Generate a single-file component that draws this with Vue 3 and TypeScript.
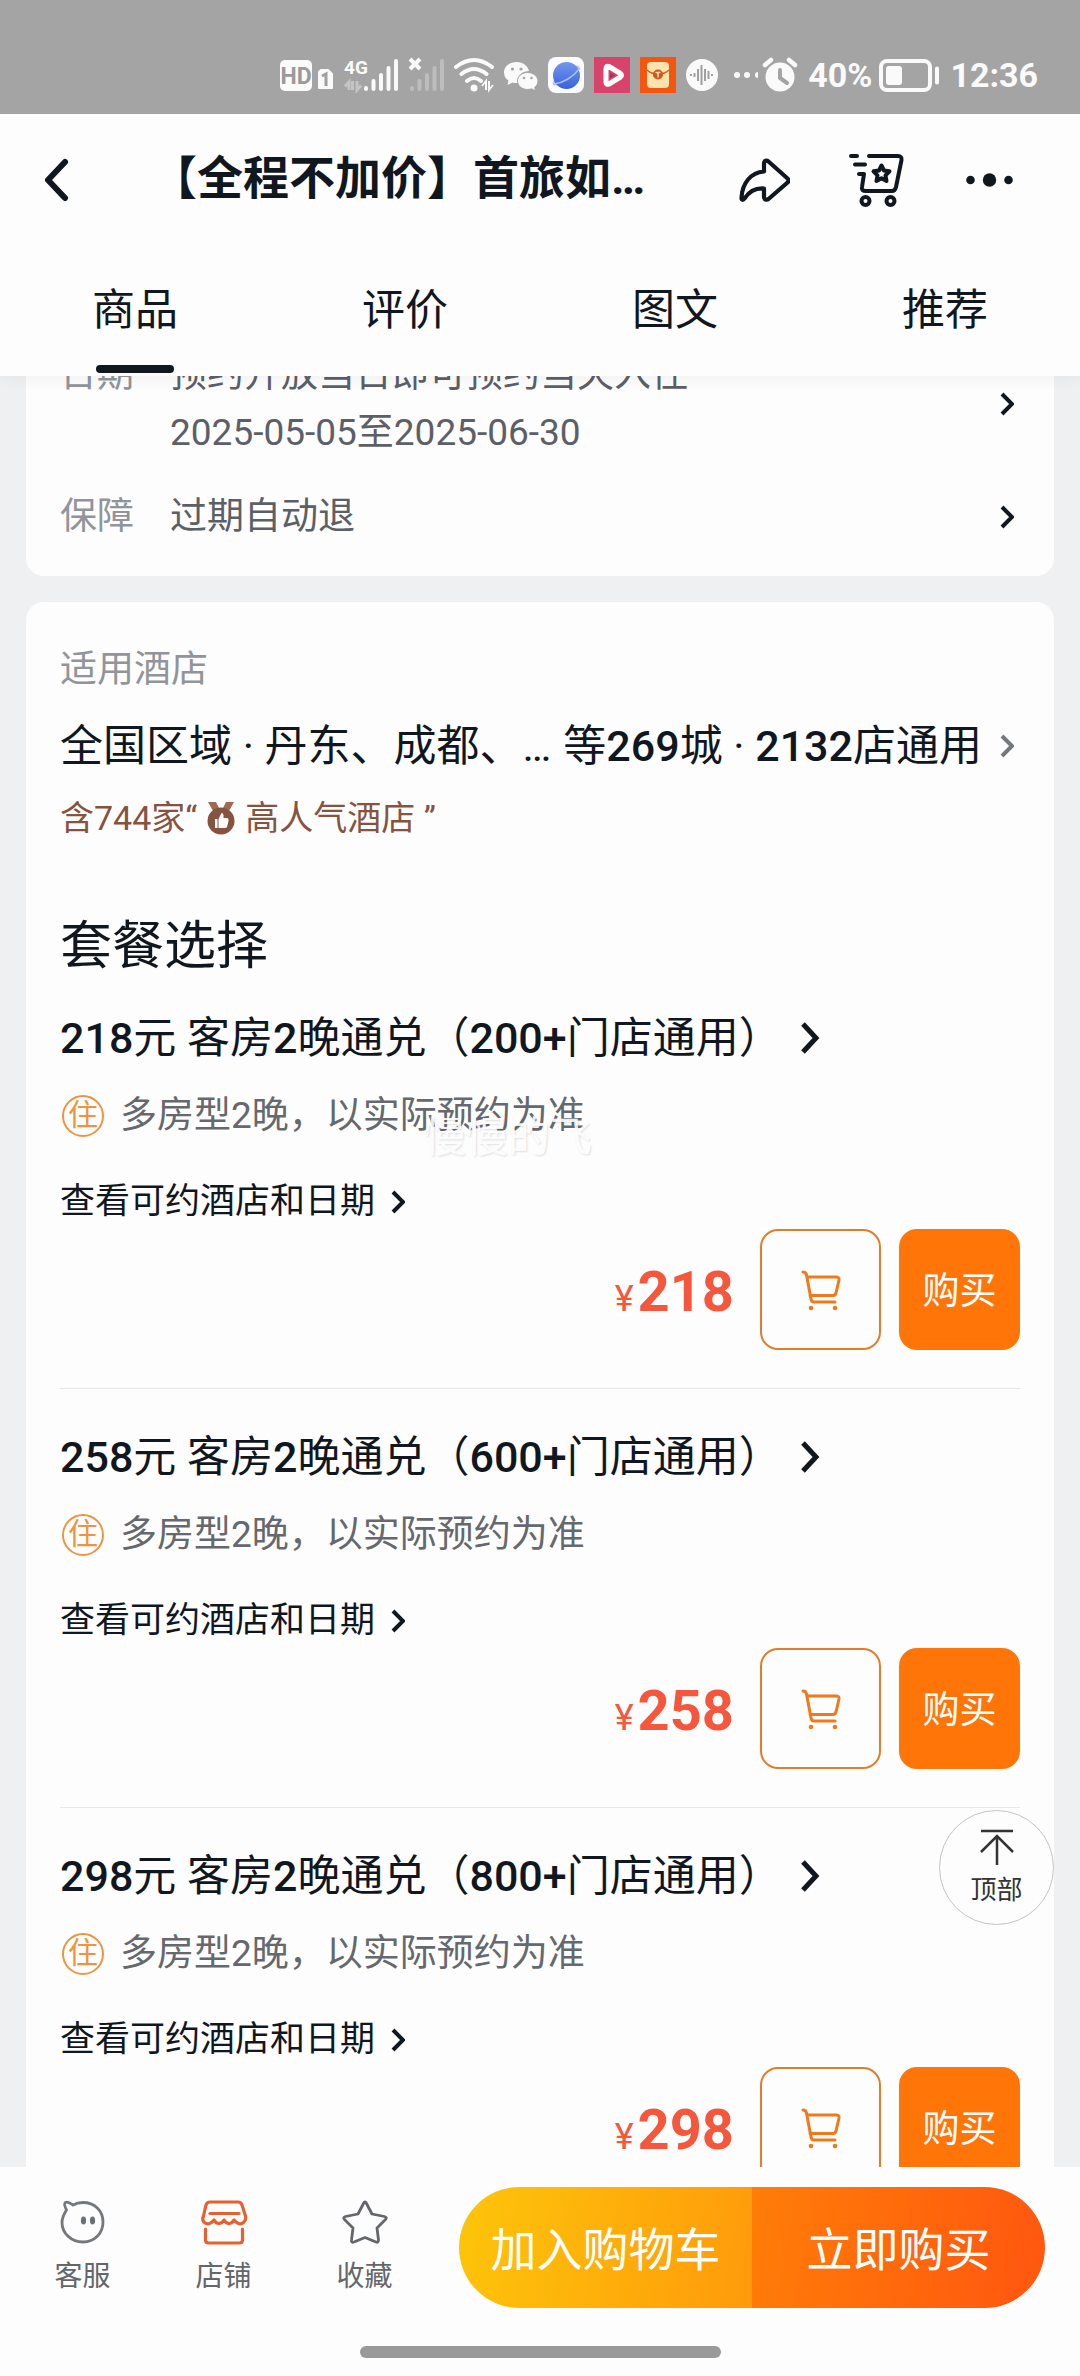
<script setup lang="ts">
import { ref } from 'vue'

interface PackageItem {
  id: number
  price: number
  stores: string
}

const tabs = ['商品', '评价', '图文', '推荐']
const activeTab = ref(0)

const packages: PackageItem[] = [
  { id: 1, price: 218, stores: '200+' },
  { id: 2, price: 258, stores: '600+' },
  { id: 3, price: 298, stores: '800+' },
]
</script>

<template>
  <div class="screen">
    <div class="status">
      <svg width="54" height="36" viewBox="0 0 54 36">
        <rect x="0" y="3" width="32" height="31" rx="5" fill="#fafafa" />
        <text x="16" y="27" text-anchor="middle" class="hd">HD</text>
        <path d="M41 13h7l4 4v14H39V15z" fill="#fafafa" stroke="#fafafa" stroke-width="2" stroke-linejoin="round" />
        <path d="M42 19l4-2v12" fill="none" stroke="#9f9f9f" stroke-width="3" />
      </svg>
      <svg width="54" height="36" viewBox="0 0 54 36">
        <text x="0" y="17" class="net">4G</text>
        <path d="M5 33V25l-4 4.500M8.500 24v9M13 24v9l4-4.500" fill="none" stroke="#c4c4c4" stroke-width="3" />
        <path d="M22 31v1M29.500 24v8M37 18v14M44.500 11v21M52 4v28" stroke="#fafafa" stroke-width="4" stroke-linecap="round" />
      </svg>
      <svg width="36" height="36" viewBox="0 0 36 36">
        <path d="M4 31v1M11.500 24v8M19 18v14M26.500 11v21M34 4v28" stroke="#bdbdbd" stroke-width="4" stroke-linecap="round" />
        <path d="M2 2l10 10M12 2l-10 10" stroke="#fafafa" stroke-width="4" />
      </svg>
      <svg width="40" height="36" viewBox="0 0 40 36">
        <path d="M2 10q18-14 36 0M7.500 17q12.500-10 25 0M13 24q7-6 14 0" fill="none" stroke="#fafafa" stroke-width="4" stroke-linecap="round" />
        <circle cx="20" cy="31" r="3.500" fill="#fafafa" />
        <path d="M32 33v-9l-4 5M35 24v9l4-5" fill="none" stroke="#fafafa" stroke-width="2" />
      </svg>
      <svg width="34" height="36" viewBox="0 0 34 36">
        <path d="M13 5C5.500 5 0 9.500 0 15.500c0 3.500 1.800 6.200 4.500 8L3.500 28l5-2.500q2.500.700 5 .500C13 18 19 14 25 14 24 9 19 5 13 5z" fill="#fafafa" />
        <path d="M23.500 15.500c-5.500 0-10 3.700-10 8.500s4.500 8.500 10 8.500q2.300 0 4-.700l4 2-.800-3.500c2-1.600 3.300-3.800 3.300-6.300 0-4.800-4.900-8.500-10.500-8.500z" fill="#fafafa" stroke="#a4a4a4" stroke-width="1" />
        <g fill="#a4a4a4"><circle cx="8.500" cy="12" r="1.600" /><circle cx="17" cy="12" r="1.600" /><circle cx="20" cy="21" r="1.300" /><circle cx="27.500" cy="21" r="1.300" /></g>
      </svg>
      <svg width="36" height="36" viewBox="0 0 36 36">
        <defs>
          <linearGradient id="planet" x1="0" y1="0" x2="0" y2="1"><stop offset="0" stop-color="#7397f0" /><stop offset="1" stop-color="#3b62d8" /></linearGradient>
        </defs>
        <rect width="36" height="36" rx="8" fill="#fbfcff" />
        <ellipse cx="18" cy="18.500" rx="16" ry="5" transform="rotate(-35 18 18.500)" fill="#b9caf6" />
        <circle cx="18.500" cy="18.500" r="13.500" fill="url(#planet)" />
        <path d="M6 27q15-2 26-16" fill="none" stroke="#a9c0f8" stroke-width="1.500" />
      </svg>
      <svg width="36" height="36" viewBox="0 0 36 36">
        <rect width="36" height="36" fill="#d8436b" />
        <path d="M12 11.500v14c0 1.800 1.500 2.200 3 1.500L26.500 20c1.500-1 1.500-2.500 0-3.500L15 9.500c-1.500-.800-3 0-3 2z" fill="#d8436b" stroke="#fff" stroke-width="5" stroke-linejoin="round" />
        <path d="M16 15.500v6l5-3z" fill="#a8325a" />
      </svg>
      <svg width="36" height="36" viewBox="0 0 36 36">
        <rect width="36" height="36" fill="#f2560f" />
        <rect x="7" y="5" width="22" height="26" rx="4" fill="#fde3ad" />
        <path d="M7 13q4 4 11 4t11-4" fill="none" stroke="#c9611e" stroke-width="1.500" />
        <circle cx="18" cy="17.500" r="5" fill="#d4541a" />
        <path d="M15.500 15.500h5M18 15.500v5" stroke="#fde3ad" stroke-width="1.500" />
      </svg>
      <svg width="38" height="36" viewBox="0 0 38 36">
        <circle cx="16" cy="18" r="16" fill="#fafafa" />
        <path d="M5 17v2M8.500 16v4M12 12v12M15.500 8v20M19 12v12M22.500 14v8M26 17v2" stroke="#a0a0a0" stroke-width="2" />
      </svg>
      <svg width="64" height="36" viewBox="0 0 64 36">
        <g fill="#fafafa">
          <circle cx="3" cy="18" r="3" /><circle cx="13" cy="18" r="3" /><path d="M24 15v6a3 3 0 0 1 0-6z" />
          <circle cx="46" cy="20" r="14.500" />
        </g>
        <path d="M31 8l6-5M55 3l6 5" stroke="#fafafa" stroke-width="4.500" stroke-linecap="round" />
        <path d="M46 13v8l7 5" fill="none" stroke="#a4a4a4" stroke-width="4" stroke-linecap="round" />
      </svg>
      <span class="power">
        <span class="status-text">40%</span>
        <svg width="61" height="36" viewBox="0 0 61 36">
          <rect x="2" y="4" width="49" height="29" rx="6" fill="none" stroke="#fafafa" stroke-width="4" />
          <rect x="7" y="9" width="16" height="19" rx="3" fill="#fafafa" />
          <path d="M58 11.500v14" stroke="#fafafa" stroke-width="4" stroke-linecap="round" />
        </svg>
      </span>
      <span class="status-text">12:36</span>
    </div>

    <header class="header">
      <button class="plain" aria-label="返回">
        <svg width="26" height="44" viewBox="0 0 26 44"><path d="M22 4L5 22l17 18" fill="none" stroke="#11171f" stroke-width="6" stroke-linecap="round" stroke-linejoin="round" /></svg>
      </button>
      <h1 class="title">【全程不加价】首旅如…</h1>
      <button class="plain" aria-label="分享">
        <svg width="54" height="54" viewBox="0 0 54 54"><path d="M27 8.500c0-3 2.500-3.500 4.500-2L50 23c2 1.800 2 3.200 0 5L31.500 44c-2 1.500-4.500.500-4.500-2v-8.500C17 33 12 37 7.500 43.500 6 45.500 4.500 45 4.500 43 5 28 14 17.500 27 16.500z" transform="translate(1 2)" fill="none" stroke="#11171f" stroke-width="4.200" stroke-linejoin="round" /></svg>
      </button>
      <button class="plain" aria-label="购物车">
        <svg width="60" height="56" viewBox="0 0 60 56">
          <g fill="none" stroke="#11171f" stroke-width="4" stroke-linecap="round" stroke-linejoin="round">
            <path d="M3 4h6M7 12.500h10M21 4h29q4 0 3.500 4L48 35q-1 4-4 4H18q-5 0-4-4l2-13h-5" />
            <path d="M33.500 13.500l2.500 5 5.500.800-4 4 1 5.700-5-2.700-5 2.700 1-5.700-4-4 5.500-.800z" />
            <circle cx="17.500" cy="49" r="4" /><circle cx="42.500" cy="49" r="4" />
          </g>
        </svg>
      </button>
      <button class="plain" aria-label="更多">
        <svg width="48" height="16" viewBox="0 0 48 16" fill="#11171f"><circle cx="4.500" cy="8" r="4.300" /><circle cx="23.500" cy="8" r="6.700" /><circle cx="42.500" cy="8" r="4.300" /></svg>
      </button>
    </header>

    <nav class="tabs">
      <button
        v-for="(tab, i) in tabs"
        :key="tab"
        class="tab"
        :class="{ active: i === activeTab }"
        @click="activeTab = i"
      >{{ tab }}</button>
    </nav>

    <main class="content">
      <section class="card info">
        <div class="info-row">
          <span class="label">日期</span>
          <span class="value">预约开放当日即可预约当天入住<br />2025-05-05至2025-06-30</span>
          <svg class="chev" width="14" height="24" viewBox="0 0 14 24"><path d="M2 2l10 10L2 22" /></svg>
        </div>
        <div class="info-row">
          <span class="label">保障</span>
          <span class="value">过期自动退</span>
          <svg class="chev" width="14" height="24" viewBox="0 0 14 24"><path d="M2 2l10 10L2 22" /></svg>
        </div>
      </section>

      <section class="card detail">
        <p class="label">适用酒店</p>
        <a class="hotels" href="#hotels">
          <span class="cities">全国区域 · 丹东、成都、…</span>
          <span>等<b>269</b>城 · <b>2132</b>店通用</span>
          <svg class="chev gray" width="14" height="24" viewBox="0 0 14 24"><path d="M2 2l10 10L2 22" /></svg>
        </a>
        <p class="popular">
          <span>含744家“</span>
          <svg width="28" height="34" viewBox="0 0 28 34">
            <path d="M1 1h8l3 6-6 3zM27 1h-8l-3 6 6 3z" fill="#a06a52" />
            <circle cx="14" cy="20" r="13.500" fill="#855340" />
            <path d="M8 18h2.500v9H8zM11.500 18l3-6q2.500 0 2 5h4q1.500 1 1 3l-1.500 6q-.500 1-2 1h-6.500z" fill="#fff" />
          </svg>
          <span>高人气酒店 ”</span>
        </p>

        <h2 class="heading">套餐选择</h2>
        <div class="packages">
          <article v-for="item in packages" :key="item.id" class="package">
            <a class="pkg-title" href="#package">
              <span><b>{{ item.price }}</b>元 客房<b>2</b>晚通兑（<b>{{ item.stores }}</b>门店通用）</span>
              <svg width="20" height="34" viewBox="0 0 20 34"><path d="M3 3l13 14L3 31" /></svg>
            </a>
            <p class="desc">
              <span class="stay">住</span>
              <span>多房型2晚，以实际预约为准</span>
            </p>
            <a class="dates" href="#dates">
              <span>查看可约酒店和日期</span>
              <svg class="chev" width="14" height="24" viewBox="0 0 14 24"><path d="M2 2l10 10L2 22" /></svg>
            </a>
            <div class="buy-row">
              <p class="price"><span class="yen">¥</span>{{ item.price }}</p>
              <button class="cart-btn" aria-label="加入购物车">
                <svg width="40" height="42" viewBox="0 0 40 42">
                  <path d="M2 3q3 0 3.500 3l4.500 24q.500 3 3 3h21M6 8h29q3.500 0 3 3l-3 13q-.700 2.500-3 2.500H9" fill="none" stroke="#f0791c" stroke-width="3" stroke-linecap="round" stroke-linejoin="round" />
                  <circle cx="10" cy="39" r="2.300" fill="#f0791c" /><circle cx="34" cy="39" r="2.300" fill="#f0791c" />
                </svg>
              </button>
              <button class="buy-btn">购买</button>
            </div>
            <span v-if="item.id === 1" class="watermark">慢慢的飞</span>
          </article>
        </div>
      </section>

      <button class="to-top">
        <svg width="36" height="38" viewBox="0 0 36 38"><path d="M2 3h32M18 37V8M2 24L18 8l16 16" fill="none" stroke="#333" stroke-width="2.500" /></svg>
        <span>顶部</span>
      </button>
    </main>

    <footer class="footer">
      <div class="actions">
        <button class="action">
          <svg width="48" height="46" viewBox="0 0 48 46">
            <path d="M14 6C11 4 8 2.500 6.500 3.500S6 8 7.500 11C5 15 3 19 3 23.500 3 34.500 12.500 43 24 43s20-8.500 20-20S35.500 3.500 24 3.500q-5.500 0-10 2.500z" fill="none" stroke="#74777b" stroke-width="2.800" stroke-linejoin="round" />
            <ellipse cx="24.500" cy="21.500" rx="2.600" ry="4" fill="#6b6e72" /><ellipse cx="33.500" cy="21.500" rx="2.600" ry="4" fill="#6b6e72" />
          </svg>
          <span>客服</span>
        </button>
        <button class="action">
          <svg width="48" height="46" viewBox="0 0 48 46">
            <g fill="none" stroke="#e5612f" stroke-width="3.200" stroke-linecap="round" stroke-linejoin="round">
              <path d="M10 3h28q3 0 4 3l3.500 11q1 4-2 6.500t-6 .500q-2-1-3.500-3-1.500 3-4.500 3.500t-5.500-3.500q-2 3.500-5 3.500t-5-3.500q-1.500 2-3.500 3-3 2-6-.500T3.500 17L6 6q1-3 4-3zM10 14.500h29" />
              <path d="M5.500 30v11q0 3 3 3h31q3 0 3-3V30" />
            </g>
          </svg>
          <span>店铺</span>
        </button>
        <button class="action">
          <svg width="48" height="46" viewBox="0 0 48 46"><path d="M22.500 4.500q1.500-3 3 0L31 15l12.500 2.500q3 1 1 3L36 29l1.500 12q0 3-2.500 2L24 38.500 13 43q-3 1-2.500-2L12 29 3.500 20.500q-2-2 1-3L17 15z" fill="none" stroke="#63666b" stroke-width="2.800" stroke-linejoin="round" /></svg>
          <span>收藏</span>
        </button>
      </div>
      <div class="cta">
        <button class="add">加入购物车</button>
        <button class="now">立即购买</button>
      </div>
    </footer>
    <div class="home"><i></i></div>
  </div>
</template>

<style>
body {
  margin: 0;
}
</style>

<style scoped>
.screen {
  height: 100vh;
  display: flex;
  flex-direction: column;
  overflow: hidden;
  background: #fdfdfd;
  color: #11171f;
  font-family: Roboto, "Noto Sans CJK SC", sans-serif;
}
button {
  margin: 0;
  padding: 0;
  border: 0;
  background: none;
  color: inherit;
  font: inherit;
}
a {
  color: inherit;
  text-decoration: none;
}
p,
h1,
h2 {
  margin: 0;
  font-weight: 400;
}
b {
  font-weight: 500;
}
svg {
  display: block;
  flex: none;
}
.status {
  flex: none;
  display: flex;
  justify-content: flex-end;
  align-items: flex-end;
  gap: 10px;
  height: 93px;
  padding: 0 42px 21px 0;
  background: #a4a4a4;
}
.power {
  display: flex;
  gap: 7px;
}
.status-text {
  color: #fafafa;
  font-size: 34px;
  font-weight: 700;
  line-height: 36px;
}
.hd {
  font-size: 23px;
  font-weight: 700;
  fill: #9a9a9a;
}
.net {
  font-size: 19px;
  font-weight: 700;
  fill: #fafafa;
}
.header {
  position: relative;
  z-index: 2;
  flex: none;
  display: flex;
  align-items: center;
  gap: 58px;
  height: 132px;
  padding: 0 66px 0 43px;
  background: #fdfdfd;
}
.plain {
  display: flex;
}
.title {
  flex: 1;
  min-width: 0;
  padding: 0 0 4px 24px;
  overflow: hidden;
  font-size: 46px;
  font-weight: 700;
  line-height: 64px;
  white-space: nowrap;
}
.tabs {
  position: relative;
  z-index: 1;
  flex: none;
  display: flex;
  height: 130px;
  background: #fdfdfd;
  box-shadow: 0 2px 16px rgba(0, 0, 0, 0.06);
}
.tab {
  position: relative;
  flex: 1;
  padding-bottom: 10px;
  font-size: 43px;
}
.tab.active::after {
  content: "";
  position: absolute;
  bottom: 3px;
  left: calc(50% - 39px);
  width: 78px;
  height: 8px;
  border-radius: 4px;
  background: #11171f;
}
.content {
  position: relative;
  flex: 1;
  min-height: 0;
  overflow: hidden;
  padding: 0 26px;
  background: #eef0f2;
}
.card {
  padding: 0 34px;
  border-radius: 18px;
  background: #fdfdfd;
}
.info {
  display: flex;
  flex-direction: column;
  gap: 26px;
  margin-top: -30px;
  padding-bottom: 30px;
}
.info-row {
  display: flex;
  align-items: center;
  gap: 36px;
  padding-right: 6px;
  color: #5c6066;
  font-size: 37px;
  line-height: 58px;
}
.info-row .label {
  align-self: flex-start;
  line-height: 58px;
}
.value {
  flex: 1;
}
.label {
  color: #919499;
  font-size: 37px;
  line-height: 52px;
}
.chev path {
  fill: none;
  stroke: #11171f;
  stroke-width: 4px;
}
.chev.gray path {
  stroke: #74777b;
}
.detail {
  margin-top: 26px;
  padding-top: 42px;
}
.hotels {
  display: flex;
  align-items: center;
  margin-top: 20px;
  padding-right: 6px;
  font-size: 43px;
  line-height: 60px;
  white-space: nowrap;
}
.cities {
  flex: 1;
}
.hotels svg {
  margin-left: 18px;
}
.popular {
  display: flex;
  align-items: center;
  gap: 10px;
  margin-top: 18px;
  color: #855340;
  font-size: 34px;
  line-height: 48px;
}
.heading {
  margin-top: 70px;
  font-size: 52px;
  line-height: 70px;
}
.package {
  position: relative;
  padding: 38px 0;
  border-bottom: 1px solid #e6e7e9;
}
.package:first-child {
  padding-top: 26px;
}
.pkg-title {
  display: flex;
  align-items: center;
  gap: 18px;
  font-size: 43px;
  line-height: 60px;
}
.pkg-title path {
  fill: none;
  stroke: #11171f;
  stroke-width: 5px;
}
.desc {
  display: flex;
  align-items: center;
  gap: 16px;
  margin-top: 22px;
  padding-left: 2px;
  color: #65686d;
  font-size: 37px;
  line-height: 52px;
}
.stay {
  box-sizing: border-box;
  width: 42px;
  height: 42px;
  border: 2px solid #ee9440;
  border-radius: 50%;
  color: #ee9440;
  font-size: 30px;
  line-height: 36px;
  text-align: center;
}
.dates {
  display: flex;
  align-items: center;
  gap: 16px;
  margin-top: 36px;
  font-size: 35px;
  line-height: 48px;
}
.buy-row {
  display: flex;
  justify-content: flex-end;
  align-items: center;
  gap: 18px;
  margin-top: 3px;
}
.price {
  margin-right: 8px;
  padding-top: 12px;
  color: #f4573c;
  font-size: 56px;
  font-weight: 700;
  line-height: 64px;
}
.yen {
  margin-right: 4px;
  font-size: 36px;
  font-weight: 400;
}
.cart-btn,
.buy-btn {
  display: flex;
  justify-content: center;
  align-items: center;
  box-sizing: border-box;
  width: 121px;
  height: 121px;
  border-radius: 18px;
}
.cart-btn {
  border: 2px solid #e07e2c;
}
.buy-btn {
  padding-bottom: 4px;
  background: #ff7508;
  color: #fff;
  font-size: 37px;
}
.watermark {
  position: absolute;
  top: 130px;
  left: 364px;
  color: rgba(255, 255, 255, 0.9);
  font-size: 42px;
  line-height: 52px;
  text-shadow: 1px 1px 2px rgba(0, 0, 0, 0.12);
}
.to-top {
  position: absolute;
  right: 26px;
  bottom: 242px;
  display: flex;
  flex-direction: column;
  align-items: center;
  justify-content: center;
  gap: 6px;
  box-sizing: border-box;
  width: 115px;
  height: 115px;
  border: 1px solid #c4c4c4;
  border-radius: 50%;
  background: #fdfdfd;
  color: #333;
  font-size: 26px;
  line-height: 36px;
}
.footer {
  flex: none;
  display: flex;
  align-items: center;
  gap: 24px;
  height: 161px;
  padding: 0 35px 0 12px;
}
.actions {
  display: flex;
}
.action {
  display: flex;
  flex-direction: column;
  align-items: center;
  gap: 12px;
  width: 141px;
  color: #63666b;
  font-size: 28px;
  line-height: 40px;
}
.cta {
  flex: 1;
  display: flex;
  height: 121px;
  overflow: hidden;
  border-radius: 61px;
  color: #fff;
  font-size: 46px;
}
.cta button {
  flex: 1;
  padding-bottom: 4px;
}
.add {
  background: linear-gradient(100deg, #fdc50a, #ff9a0b);
}
.now {
  background: linear-gradient(100deg, #ff7d08, #ff5610);
}
.home {
  flex: none;
  display: flex;
  justify-content: center;
  height: 30px;
  padding-top: 18px;
}
.home i {
  width: 361px;
  height: 12px;
  border-radius: 6px;
  background: #999;
}
</style>
